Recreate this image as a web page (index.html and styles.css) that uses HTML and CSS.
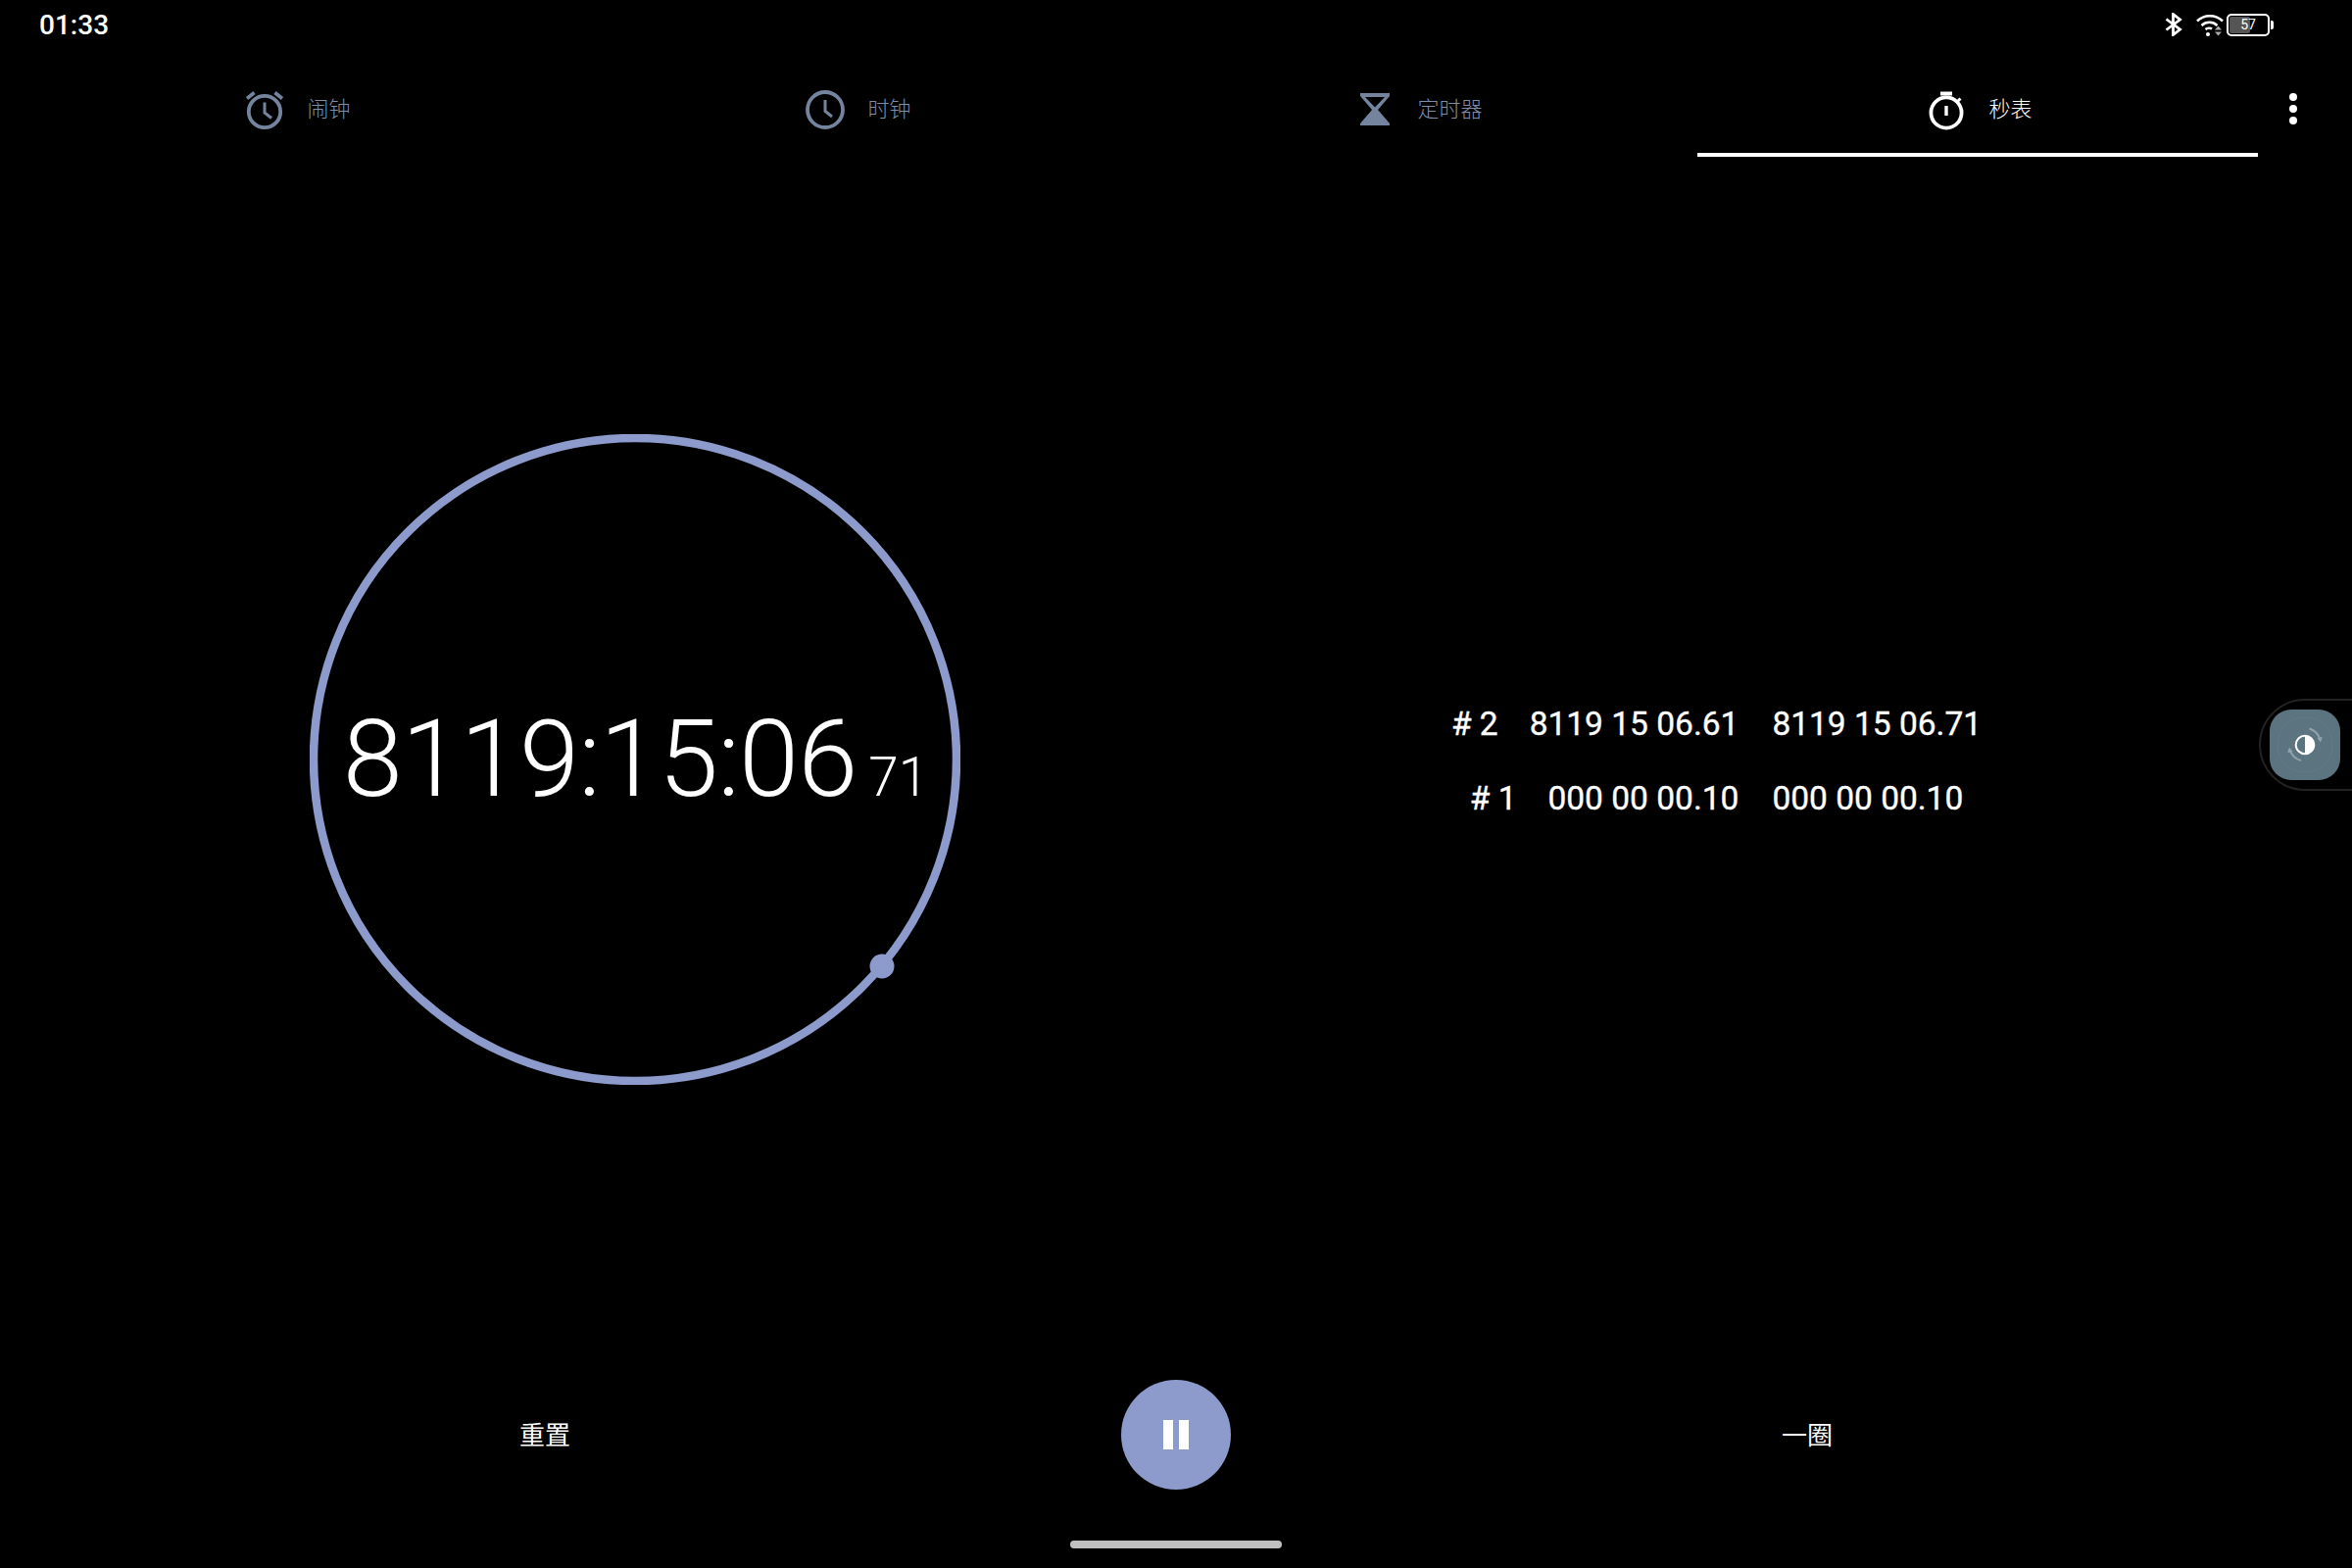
FILE: index.html
```html
<!DOCTYPE html>
<html lang="zh-CN">
<head>
<meta charset="utf-8">
<title>秒表</title>
<link rel="stylesheet" href="styles.css">
</head>
<body>
<div class="screen">
  <header class="status">
    <span class="clock-time">01:33</span>
    <div class="status-icons">
      <svg class="ic-bt" width="18" height="24" viewBox="0 0 18 24"><path d="M1.500 6.500 15.500 17 8.500 22.500V1.500L15.500 7 1.500 17.500" fill="none" stroke="#fff" stroke-width="2.800"/></svg>
      <svg class="ic-wifi" width="28" height="24" viewBox="0 0 28 24">
        <path d="M1 8.500C8 1.500 20 1.500 27 8.500" fill="none" stroke="#fff" stroke-width="2.500"/>
        <path d="M5.500 13C10 8.800 17 8.800 21.500 13" fill="none" stroke="#fff" stroke-width="2.500"/>
        <path d="M9.500 17C11.500 15.300 14.500 15.300 16 16.500" fill="none" stroke="#fff" stroke-width="2.500"/>
        <circle cx="12" cy="22" r="2" fill="#fff"/>
        <path d="M19 17.500 22.500 13.500 26 17.500ZM19 19.500H26L22.500 23.500Z" fill="#aaa"/>
      </svg>
      <div class="battery">
        <div class="battery-body"><div class="battery-fill"></div><span class="battery-num">57</span></div>
        <div class="battery-nub"></div>
      </div>
    </div>
  </header>

  <nav class="tabs">
    <div class="tab-strip">
      <div class="tab">
        <svg class="tab-icon" width="42" height="42" viewBox="0 0 42 42" fill="none" stroke="currentColor">
          <circle cx="21" cy="23" r="16.200" stroke-width="3.800"/>
          <path d="M21 13.500V24L28 29.500" stroke-width="3"/>
          <path d="M3 9.500 10.500 3.500M39 9.500 31.500 3.500" stroke-width="3.600"/>
        </svg>
        <span class="tab-label">闹钟</span>
      </div>
      <div class="tab">
        <svg class="tab-icon" width="42" height="42" viewBox="0 0 42 42" fill="none" stroke="currentColor">
          <circle cx="21" cy="21" r="18" stroke-width="3.800"/>
          <path d="M21 11V22.500L28 28" stroke-width="3"/>
        </svg>
        <span class="tab-label">时钟</span>
      </div>
      <div class="tab">
        <svg class="tab-icon" width="42" height="42" viewBox="0 0 42 42" fill="currentColor">
          <path fill-rule="evenodd" d="M6 4H36V7L24 21 36 35V37H6V35L18 21 6 7ZM11 8 21 18.500 31 8Z"/>
        </svg>
        <span class="tab-label">定时器</span>
      </div>
      <div class="tab tab-active">
        <svg class="tab-icon" width="42" height="42" viewBox="0 0 42 42" fill="none" stroke="currentColor">
          <circle cx="21" cy="24" r="15.600" stroke-width="3.800"/>
          <path d="M15 4.500H27" stroke-width="4"/>
          <path d="M21 17V27" stroke-width="3.400"/>
          <path d="M32.500 12.500 35.500 9.500" stroke-width="3"/>
        </svg>
        <span class="tab-label">秒表</span>
      </div>
    </div>
    <div class="overflow"><i></i><i></i><i></i></div>
  </nav>

  <main class="main">
    <section class="dial-pane">
      <div class="dial">
        <svg class="dial-ring" width="664" height="664" viewBox="0 0 664 664">
          <circle cx="332" cy="332" r="328" fill="none" stroke="#8c9bcb" stroke-width="8.500"/>
          <circle cx="584" cy="543" r="12.500" fill="#8c9bcb"/>
        </svg>
        <div class="time"><span class="time-main">8119:15:06</span><span class="time-frac">71</span></div>
      </div>
    </section>
    <section class="laps-pane">
      <div class="laps">
        <div class="lap-head"><span># 2</span><span>8119 15 06.61</span></div><span>8119 15 06.71</span>
        <div class="lap-head"><span># 1</span><span>000 00 00.10</span></div><span>000 00 00.10</span>
      </div>
    </section>
  </main>

  <section class="controls">
    <button class="ctl">重置</button>
    <button class="pause" aria-label="暂停"><i></i><i></i></button>
    <button class="ctl">一圈</button>
  </section>

  <footer class="gesture"><div class="gesture-bar"></div></footer>

  <aside class="side">
    <div class="side-btn">
      <svg width="72" height="72" viewBox="0 0 72 72" fill="none">
        <circle cx="36" cy="36" r="28" stroke="#647b87" stroke-width="1"/>
        <circle cx="36" cy="36" r="9.300" stroke="#fff" stroke-width="2"/>
        <path d="M36 27A9 9 0 0 1 36 45Z" fill="#fff"/>
        <path d="M40.500 19.500A16.500 16.500 0 0 1 51.500 31" stroke="#8fa3ad" stroke-width="2"/>
        <path d="M32 52A16.500 16.500 0 0 1 20.500 41" stroke="#8fa3ad" stroke-width="2"/>
        <path d="M52 33.500 48.500 29 53.800 28Z M20 38.500 23.500 43 18.200 44Z" fill="#8fa3ad"/>
      </svg>
    </div>
  </aside>
</div>
</body>
</html>
```
FILE: styles.css
```css
* { box-sizing: border-box; }
html, body { margin: 0; padding: 0; background: #000; }
.screen {
  position: relative;
  width: 2400px;
  height: 1600px;
  overflow: hidden;
  background: #000;
  color: #fff;
  display: flex;
  flex-direction: column;
  font-family: Roboto, "Noto Sans CJK SC", sans-serif;
}
.status {
  height: 50px;
  padding: 0 80px 0 40px;
  display: flex;
  align-items: center;
  justify-content: space-between;
}
.clock-time { font-size: 28px; font-weight: 500; line-height: 50px; padding-top: 2px; }
.status-icons { display: flex; align-items: center; gap: 3px; height: 46px; }
.ic-bt { margin-right: 11px; }
.battery { display: flex; align-items: center; gap: 1px; }
.battery-body {
  position: relative;
  width: 44px;
  height: 23px;
  border: 2px solid #fff;
  border-radius: 5px;
  display: flex;
  align-items: center;
  justify-content: center;
}
.battery-fill { position: absolute; left: 1px; top: 1px; bottom: 1px; width: 21px; background: #555; border-radius: 2px; }
.battery-num { position: relative; font-size: 14px; line-height: 1; }
.battery-nub { width: 3px; height: 9px; background: #fff; border-radius: 0 2px 2px 0; }
.tabs {
  height: 110px;
  padding-left: 16px;
  display: flex;
}
.tab-strip { width: 2288px; display: grid; grid-template-columns: repeat(4, 1fr); }
.tab {
  display: flex;
  align-items: center;
  justify-content: center;
  gap: 22px;
  padding: 24px 0 6px 3px;
  color: #7f8da6;
  font-size: 22px;
  font-weight: 300;
  border-bottom: 4px solid transparent;
}
.tab-icon { color: #75849e; }
.tab-label { margin-bottom: 6px; }
.tab-active { color: #fff; border-bottom-color: #fff; }
.tab-active .tab-icon { color: #fff; }
.overflow {
  flex: 1;
  display: flex;
  flex-direction: column;
  align-items: center;
  gap: 4px;
  padding: 45px 27px 0 0;
  margin-left: 2px;
}
.overflow i { width: 8px; height: 8px; border-radius: 50%; background: #fff; }
.main { height: 1230px; display: grid; grid-template-columns: 1295px 910px; }
.dial-pane, .laps-pane { display: flex; align-items: center; justify-content: center; }
.dial { position: relative; width: 664px; height: 664px; display: flex; align-items: center; justify-content: center; }
.dial-ring { position: absolute; inset: 0; }
.time { position: relative; display: flex; align-items: baseline; gap: 12px; padding-left: 2px; line-height: 1; }
.time-main { font-size: 110px; font-weight: 300; letter-spacing: -1px; }
.time-frac { font-size: 55px; font-weight: 300; }
.laps {
  display: grid;
  grid-template-columns: auto auto;
  column-gap: 34px;
  row-gap: 36px;
  padding: 4px 0 0 3px;
  font-size: 33.5px;
  font-weight: 400;
  -webkit-text-stroke: 0.35px #fff;
  line-height: 40px;
}
.lap-head { display: flex; justify-content: flex-end; gap: 32px; }
.controls {
  height: 148px;
  display: grid;
  grid-template-columns: 1fr 112px 1fr;
  column-gap: 32px;
  align-items: center;
}
.ctl {
  background: none;
  border: 0;
  padding: 0 0 3px;
  color: #fff;
  font: 400 26px Roboto, "Noto Sans CJK SC", sans-serif;
  text-align: center;
}
.pause {
  width: 112px;
  height: 112px;
  border: 0;
  padding: 0;
  border-radius: 50%;
  background: #8c9bcb;
  display: flex;
  align-items: center;
  justify-content: center;
  gap: 6px;
}
.pause i { width: 10px; height: 30px; background: #fff; }
.gesture { flex: 1; padding-top: 34px; display: flex; justify-content: center; }
.gesture-bar { width: 216px; height: 8px; border-radius: 4px; background: #c0c0c0; }
.side {
  position: absolute;
  left: 2305px;
  top: 713px;
  width: 140px;
  height: 94px;
  border: 2px solid #222;
  border-radius: 47px;
}
.side-btn {
  position: absolute;
  left: 9px;
  top: 9px;
  width: 72px;
  height: 72px;
  border-radius: 22px;
  background: #5b7480;
}
.side-btn svg { display: block; }
```
